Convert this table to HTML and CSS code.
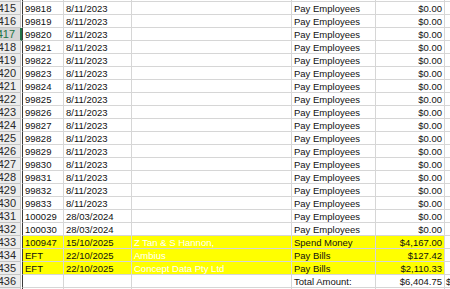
FILE: index.html
```html
<!DOCTYPE html>
<html>
<head>
<meta charset="utf-8">
<link rel="stylesheet" href="styles.css">
</head>
<body>
<div class="sheet">
  <div class="row"><div class="rh"></div><div class="c a"></div><div class="c"></div><div class="c"></div><div class="c"></div><div class="c r"></div><div class="c f"></div></div>
  <div class="row"><div class="rh">415</div><div class="c a">99818</div><div class="c">8/11/2023</div><div class="c"></div><div class="c">Pay Employees</div><div class="c r">$0.00</div><div class="c f"></div></div>
  <div class="row"><div class="rh">416</div><div class="c a">99819</div><div class="c">8/11/2023</div><div class="c"></div><div class="c">Pay Employees</div><div class="c r">$0.00</div><div class="c f"></div></div>
  <div class="row"><div class="rh sel">417</div><div class="c a">99820</div><div class="c">8/11/2023</div><div class="c"></div><div class="c">Pay Employees</div><div class="c r">$0.00</div><div class="c f"></div></div>
  <div class="row"><div class="rh">418</div><div class="c a">99821</div><div class="c">8/11/2023</div><div class="c"></div><div class="c">Pay Employees</div><div class="c r">$0.00</div><div class="c f"></div></div>
  <div class="row"><div class="rh">419</div><div class="c a">99822</div><div class="c">8/11/2023</div><div class="c"></div><div class="c">Pay Employees</div><div class="c r">$0.00</div><div class="c f"></div></div>
  <div class="row"><div class="rh">420</div><div class="c a">99823</div><div class="c">8/11/2023</div><div class="c"></div><div class="c">Pay Employees</div><div class="c r">$0.00</div><div class="c f"></div></div>
  <div class="row"><div class="rh">421</div><div class="c a">99824</div><div class="c">8/11/2023</div><div class="c"></div><div class="c">Pay Employees</div><div class="c r">$0.00</div><div class="c f"></div></div>
  <div class="row"><div class="rh">422</div><div class="c a">99825</div><div class="c">8/11/2023</div><div class="c"></div><div class="c">Pay Employees</div><div class="c r">$0.00</div><div class="c f"></div></div>
  <div class="row"><div class="rh">423</div><div class="c a">99826</div><div class="c">8/11/2023</div><div class="c"></div><div class="c">Pay Employees</div><div class="c r">$0.00</div><div class="c f"></div></div>
  <div class="row"><div class="rh">424</div><div class="c a">99827</div><div class="c">8/11/2023</div><div class="c"></div><div class="c">Pay Employees</div><div class="c r">$0.00</div><div class="c f"></div></div>
  <div class="row"><div class="rh">425</div><div class="c a">99828</div><div class="c">8/11/2023</div><div class="c"></div><div class="c">Pay Employees</div><div class="c r">$0.00</div><div class="c f"></div></div>
  <div class="row"><div class="rh">426</div><div class="c a">99829</div><div class="c">8/11/2023</div><div class="c"></div><div class="c">Pay Employees</div><div class="c r">$0.00</div><div class="c f"></div></div>
  <div class="row"><div class="rh">427</div><div class="c a">99830</div><div class="c">8/11/2023</div><div class="c"></div><div class="c">Pay Employees</div><div class="c r">$0.00</div><div class="c f"></div></div>
  <div class="row"><div class="rh">428</div><div class="c a">99831</div><div class="c">8/11/2023</div><div class="c"></div><div class="c">Pay Employees</div><div class="c r">$0.00</div><div class="c f"></div></div>
  <div class="row"><div class="rh">429</div><div class="c a">99832</div><div class="c">8/11/2023</div><div class="c"></div><div class="c">Pay Employees</div><div class="c r">$0.00</div><div class="c f"></div></div>
  <div class="row"><div class="rh">430</div><div class="c a">99833</div><div class="c">8/11/2023</div><div class="c"></div><div class="c">Pay Employees</div><div class="c r">$0.00</div><div class="c f"></div></div>
  <div class="row"><div class="rh">431</div><div class="c a">100029</div><div class="c">28/03/2024</div><div class="c"></div><div class="c">Pay Employees</div><div class="c r">$0.00</div><div class="c f"></div></div>
  <div class="row"><div class="rh">432</div><div class="c a">100030</div><div class="c">28/03/2024</div><div class="c"></div><div class="c">Pay Employees</div><div class="c r">$0.00</div><div class="c f"></div></div>
  <div class="row hl"><div class="rh">433</div><div class="c a">100947</div><div class="c">15/10/2025</div><div class="c w">Z Tan &amp; S Hannon,</div><div class="c">Spend Money</div><div class="c r">$4,167.00</div><div class="c f"></div></div>
  <div class="row hl"><div class="rh">434</div><div class="c a">EFT</div><div class="c">22/10/2025</div><div class="c w">Ambius</div><div class="c">Pay Bills</div><div class="c r">$127.42</div><div class="c f"></div></div>
  <div class="row hl"><div class="rh">435</div><div class="c a">EFT</div><div class="c">22/10/2025</div><div class="c w">Concept Data Pty Ltd</div><div class="c">Pay Bills</div><div class="c r">$2,110.33</div><div class="c f"></div></div>
  <div class="row"><div class="rh">436</div><div class="c a"></div><div class="c"></div><div class="c"></div><div class="c">Total Amount:</div><div class="c r">$6,404.75</div><div class="c f">$</div></div>
  <div class="row"><div class="rh"></div><div class="c a"></div><div class="c"></div><div class="c"></div><div class="c"></div><div class="c r"></div><div class="c f"></div></div>
</div>
</body>
</html>
```
FILE: styles.css
```css
html, body {
  margin: 0;
  padding: 0;
  background: #ffffff;
  overflow: hidden;
}
body {
  width: 450px;
  height: 289px;
  font-family: "Liberation Sans", Arial, sans-serif;
  font-size: 9.5px;
  color: #111111;
}
.sheet {
  margin-top: -11px;
}
.row {
  display: grid;
  grid-template-columns: 22px 42px 68px 160px 84px 69px 1fr;
  height: 13px;
}
.rh {
  margin-right: 1px;
  background: #ececec;
  border-right: 1px solid #c4c4c4;
  border-bottom: 1px solid #c4c4c4;
  box-sizing: border-box;
  height: 13px;
  line-height: 13px;
  display: flex;
  justify-content: flex-end;
  padding-right: 4px;
  color: #2a2a2a;
  font-size: 11px;
  overflow: hidden;
  white-space: nowrap;
}
.rh.sel {
  background: #d4d4d4;
  color: #217346;
  border-right: 2px solid #217346;
  margin-right: 0;
  padding-right: 5px;
}
.c {
  box-sizing: border-box;
  height: 13px;
  border-right: 1px solid #d6d6d6;
  border-bottom: 1px solid #d6d6d6;
  padding: 0 2px;
  line-height: 13px;
  white-space: nowrap;
  overflow: hidden;
}
.c.a {
  border-left: 1px solid #3a3a3a;
}
.c.r {
  text-align: right;
}
.c.f {
  border-right: none;
  padding-left: 1px;
}
.hl .c {
  background: #ffff00;
}
.hl .c.f {
  background: #ffffff;
}
.hl .c.w {
  color: #ffffff;
}
```
